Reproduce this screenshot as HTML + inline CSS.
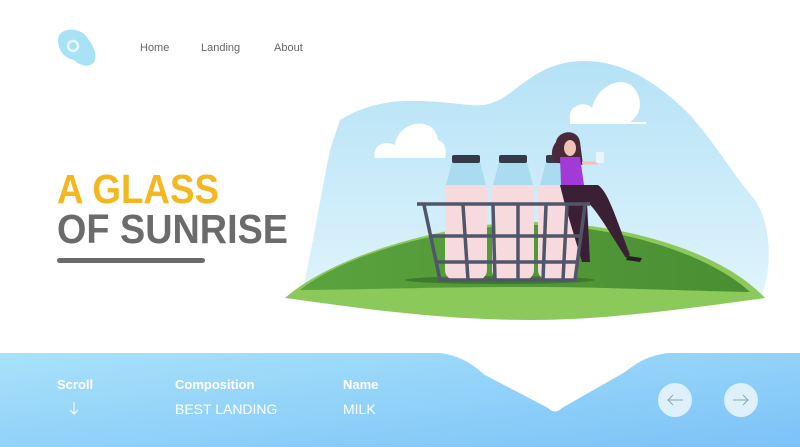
<!DOCTYPE html>
<html><head><meta charset="utf-8"><style>
body{margin:0;width:800px;height:447px;overflow:hidden;background:#fff;font-family:"Liberation Sans",sans-serif;position:relative}
.nav{position:absolute;top:42px;font-size:11px;color:#666}
.f{position:absolute;color:#fff;font-size:14px}
</style></head><body>
<svg width="800" height="447" style="position:absolute;left:0;top:0">
<defs>
<linearGradient id="ft" x1="0" y1="0" x2="1" y2="1"><stop offset="0" stop-color="#a8e2fa"/><stop offset="1" stop-color="#7cc2f8"/></linearGradient>
<linearGradient id="sky" x1="0" y1="0" x2="0" y2="1"><stop offset="0" stop-color="#b5e2f6"/><stop offset="1" stop-color="#e0f4fc"/></linearGradient>
<linearGradient id="gr" x1="0" y1="0" x2="1" y2="0"><stop offset="0" stop-color="#5aa33d"/><stop offset="1" stop-color="#4a8e33"/></linearGradient>
</defs>
<path d="M58 40 C58 28 78 26 86 36 C92 44 98 52 94 62 C90 68 80 66 74 60 C64 58 58 50 58 40Z" fill="#a8e2f7"/>
<circle cx="73" cy="46" r="5" fill="none" stroke="#e8f8fe" stroke-width="2.5"/>
<path d="M0 353 H800 V447 H0Z" fill="url(#ft)"/>
<path d="M425 352 C455 352 470 362 485 375 L548 408 Q555 415 562 408 L625 372 C640 360 655 352 685 352Z" fill="#fff"/>
<circle cx="675" cy="400" r="17" fill="#ddf0fb"/><circle cx="741" cy="400" r="17" fill="#ddf0fb"/>
<path d="M683 400H668M673 395L668 400L673 405" stroke="#8aa" fill="none" stroke-width="1"/>
<path d="M733 400H748M743 395L748 400L743 405" stroke="#8aa" fill="none" stroke-width="1"/>
<path d="M74 402V414M70 410L74 414L78 410" stroke="#fff" fill="none" stroke-width="1"/>
<path d="M340 120 C380 95 420 100 470 105 C510 110 520 70 570 62 C620 55 660 85 690 115 C720 150 730 170 755 200 C775 230 770 280 760 300 L300 300 C310 260 320 200 330 150 Z" fill="url(#sky)"/>
<path d="M375 158 C372 145 385 140 395 145 C398 120 435 115 438 140 C445 142 447 150 445 158Z" fill="#fff"/>
<path d="M570 120 C567 105 585 100 592 108 C598 82 630 72 638 95 C642 105 640 115 630 122 L646 122 L646 124 L570 124Z" fill="#fff"/>
<path d="M285 298 C340 250 460 222 530 222 C620 222 720 250 765 298 C680 310 600 320 530 320 C430 320 340 305 285 298Z" fill="#8bc95b"/>
<path d="M300 290 C350 250 460 225 530 225 C620 225 710 255 750 292 C660 290 600 287 530 287 C430 287 350 290 300 290Z" fill="url(#gr)"/>
<ellipse cx="500" cy="280" rx="95" ry="4" fill="#3f7a2c"/>
<g fill="#f6dadd">
<rect x="445" y="180" width="42" height="100" rx="10"/><rect x="492" y="180" width="42" height="100" rx="10"/><rect x="538" y="180" width="40" height="100" rx="10"/>
</g>
<g fill="#a9dcef"><path d="M452 162 H480 L486 185 H446Z"/><path d="M499 162 H527 L533 185 H493Z"/><path d="M546 162 H568 L574 185 H540Z"/></g>
<g fill="#343a4a"><rect x="452" y="155" width="28" height="8" rx="2"/><rect x="499" y="155" width="28" height="8" rx="2"/><rect x="546" y="155" width="20" height="8" rx="2"/></g>
<path d="M556 142 C558 130 578 128 580 142 L583 165 L566 162 C552 168 548 152 556 142Z" fill="#4a2a3a"/>
<ellipse cx="570" cy="148" rx="6" ry="8" fill="#f0c3b6"/>
<path d="M560 157 H580 L584 185 H561Z" fill="#a23ad8"/>
<path d="M582 163 L598 163" stroke="#f0c3b6" stroke-width="3"/>
<rect x="596" y="152" width="8" height="11" fill="#e8f5fa"/>
<path d="M560 185 L598 185 C608 192 615 215 630 255 L626 258 C605 225 595 208 587 202 L590 262 L582 262 L565 205Z" fill="#3b1f35"/>
<path d="M628 256 L642 258 L640 262 L626 260Z" fill="#222"/>
<g stroke="#505669" stroke-width="3.5" fill="none">
<path d="M417 204 H590"/>
<path d="M424 205 L440 280 H575 L585 205"/>
<path d="M430 236 H582M436 262 H578"/>
<path d="M463 205 L468 280M493 205 L495 280M518 205 L518 280M546 205 L543 280M567 205 L563 280"/>
</g>
<text x="57" y="203" font-family="Liberation Sans" font-weight="bold" font-size="41" fill="#f4b720" textLength="162" lengthAdjust="spacingAndGlyphs">A GLASS</text>
<text x="57" y="243" font-family="Liberation Sans" font-weight="bold" font-size="41" fill="#6b6b6b" textLength="231" lengthAdjust="spacingAndGlyphs">OF SUNRISE</text>
<rect x="57" y="258" width="148" height="5" rx="2.5" fill="#6b6b6b"/>
</svg>
<div class="nav" style="left:140px">Home</div>
<div class="nav" style="left:201px">Landing</div>
<div class="nav" style="left:274px">About</div>
<div class="f" style="left:57px;top:377px;font-weight:bold;font-size:13px">Scroll</div>
<div class="f" style="left:175px;top:377px;font-weight:bold;font-size:13px">Composition</div>
<div class="f" style="left:175px;top:401px">BEST LANDING</div>
<div class="f" style="left:343px;top:377px;font-weight:bold;font-size:13px">Name</div>
<div class="f" style="left:343px;top:401px">MILK</div>
</body></html>
